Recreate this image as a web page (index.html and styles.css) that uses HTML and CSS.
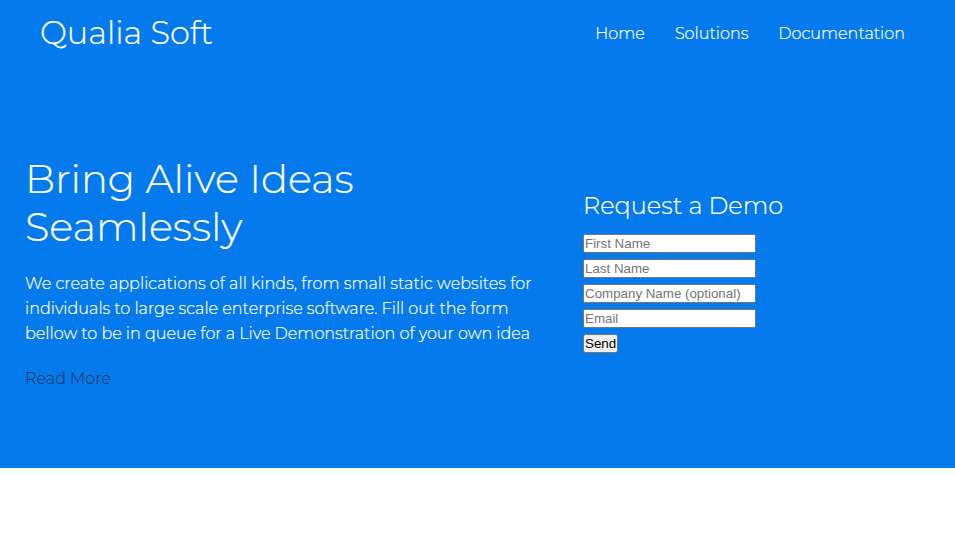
FILE: index.html
```html
<!DOCTYPE html>
<html lang="en">
<head>
<meta charset="utf-8">
<title>Qualia Soft</title>
<link rel="stylesheet" href="styles.css">
</head>
<body>
<header class="navbar">
  <h1 class="logo">Qualia Soft</h1>
  <nav class="links"><a>Home</a><a>Solutions</a><a>Documentation</a></nav>
</header>
<main class="hero">
  <section class="intro">
    <h2 class="title">Bring Alive Ideas<br>Seamlessly</h2>
    <p class="copy"><span class="lead">We create applications of all kinds, from small static websites for</span><br>individuals to large scale enterprise software. Fill out the form<br>bellow to be in queue for a Live Demonstration of your own idea</p>
    <a class="more">Read More</a>
  </section>
  <form class="demo">
    <h3 class="demo-title">Request a Demo</h3>
    <input type="text" placeholder="First Name">
    <input type="text" placeholder="Last Name">
    <input type="text" placeholder="Company Name (optional)">
    <input type="email" placeholder="Email">
    <button type="button">Send</button>
  </form>
</main>
</body>
</html>
```
FILE: styles.css
```css
* { box-sizing: border-box; margin: 0; padding: 0; }
body { font-family: Montserrat, "Open Sans", sans-serif; font-size: 16px; font-weight: 300; line-height: 25px; background: #fff; color: #fff; }
.navbar { display: flex; justify-content: space-between; align-items: center; height: 67px; padding: 0 50px 0 40px; background: #057aed; }
.logo { font-size: 32px; font-weight: 300; line-height: 40px; padding-bottom: 2px; -webkit-text-stroke: 0.2px #fff; }
.links { display: flex; gap: 30px; -webkit-text-stroke: 0.2px #fff; }
.hero { display: grid; grid-template-columns: 558px 1fr; height: 401px; padding: 88px 0 0 25px; background: #057aed; }
.title { font-size: 40px; font-weight: 300; line-height: 48px; -webkit-text-stroke: 0.2px #fff; }
.copy { margin-top: 20px; white-space: nowrap; -webkit-text-stroke: 0.2px #fff; }
.lead { letter-spacing: 0.025px; }
.more { display: block; margin-top: 20px; color: #1b2f4c; }
.demo { display: flex; flex-direction: column; align-items: flex-start; padding-top: 36px; }
.demo-title { font-size: 24px; font-weight: 300; line-height: 30px; margin-bottom: 13px; -webkit-text-stroke: 0.2px #fff; }
.demo input { width: 173px; height: 19px; font: 13.333px "Liberation Sans", sans-serif; margin-bottom: 6px; }
.demo button { height: 19px; width: 35px; color: #000; font: 13.333px "Liberation Sans", sans-serif; }
```
